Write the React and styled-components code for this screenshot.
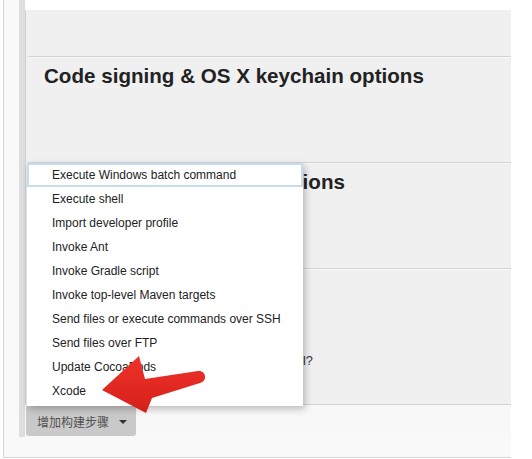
import React from "react";
import styled, { createGlobalStyle } from "styled-components";

const Global = createGlobalStyle`
  html, body { margin: 0; padding: 0; background: #ffffff; }
  body { font-family: "Liberation Sans", Arial, sans-serif; }
`;

const Frame = styled.div`
  position: relative;
  box-sizing: border-box;
  margin-left: 3px;
  width: 508px;
  height: 458px;
  padding-left: 15px;
  background: #f9f9f9;
  border-left: 1px solid #d6d6d6;
  border-bottom: 1px solid #d6d6d6;
`;

const Section = styled.div`
  display: flex;
  flex-direction: column;
  height: 437px;
  border-left: 6px solid #dedede;
  background: #ffffff;
`;

const Panel = styled.div`
  margin-top: 10px;
  display: flex;
  flex-direction: column;
  background: #f0f0f0;
  border-left: 1px solid #cfcfcf;
`;

const Row = styled.div`
  box-sizing: content-box;
  height: ${(p) => p.$h}px;
  margin-left: 2px;
  padding-left: 16px;
  border-bottom: 1px solid #d4d4d4;
  box-shadow: 0 1px 0 #f7f7f7;
`;

const Heading = styled.h2`
  margin: 0;
  padding-top: 8px;
  font-size: 20.6px;
  line-height: 22px;
  font-weight: bold;
  color: #222222;
`;

const Note = styled.div`
  padding-top: 84px;
  font-size: 12.8px;
  line-height: 16px;
  color: #333333;
`;

const Footer = styled.div`
  position: relative;
  flex: 1;
  display: flex;
  align-items: flex-start;
  padding: 1px 0 0 1px;
  background: #f8f8f8;
`;

const AddButton = styled.button`
  display: flex;
  align-items: center;
  gap: 10px;
  height: 30px;
  padding: 0 9px 0 11px;
  border: none;
  border-radius: 0 0 3px 3px;
  background: #c9c9c9;
  color: #505050;
  font-family: "Noto Sans CJK SC", "Liberation Sans", sans-serif;
  font-size: 12px;
  cursor: pointer;
`;

const Caret = styled.span`
  width: 0;
  height: 0;
  margin-top: 2px;
  border-left: 4px solid transparent;
  border-right: 4px solid transparent;
  border-top: 4px solid #333333;
`;

const Menu = styled.ul`
  position: absolute;
  left: 2px;
  bottom: calc(100% - 1px);
  width: 276px;
  margin: 0;
  padding: 0 0 3px;
  list-style: none;
  background: #ffffff;
  box-shadow: 2px 3px 7px rgba(0, 0, 0, 0.25);
  z-index: 2;
`;

const Item = styled.li`
  height: 24px;
  padding-left: 25px;
  font-size: 12px;
  line-height: 24px;
  color: #222222;
  white-space: nowrap;
  box-shadow: ${(p) => (p.$active ? "inset 0 0 0 2px #c6ddef" : "none")};
`;

const Arrow = styled.svg`
  position: absolute;
  left: 96px;
  top: 350px;
  z-index: 3;
`;

const items = [
  "Execute Windows batch command",
  "Execute shell",
  "Import developer profile",
  "Invoke Ant",
  "Invoke Gradle script",
  "Invoke top-level Maven targets",
  "Send files or execute commands over SSH",
  "Send files over FTP",
  "Update CocoaPods",
  "Xcode",
];

export default function App() {
  return (
    <>
      <Global />
      <Frame>
        <Section>
          <Panel>
            <Row $h={46} />
            <Row $h={105}>
              <Heading>Code signing &amp; OS X keychain options</Heading>
            </Row>
            <Row $h={105}>
              <Heading>Advanced Xcode build options</Heading>
            </Row>
            <Row $h={135}>
              <Note>Stop the build when a pod install or update fail?</Note>
            </Row>
          </Panel>
          <Footer>
            <Menu>
              {items.map((t, i) => (
                <Item key={t} $active={i === 0}>
                  {t}
                </Item>
              ))}
            </Menu>
            <AddButton>
              增加构建步骤
              <Caret />
            </AddButton>
          </Footer>
        </Section>
        <Arrow width="112" height="66" viewBox="100 350 112 66">
          <defs>
            <linearGradient id="ar" x1="0" y1="0" x2="0" y2="1">
              <stop offset="0" stopColor="#f0322a" />
              <stop offset="1" stopColor="#d4201a" />
            </linearGradient>
          </defs>
          <path
            d="M102 390 L139 356 L145 379 L198 371 C206 370 208 381 200 383 L152 398 L146 413 Z"
            fill="url(#ar)"
          />
        </Arrow>
      </Frame>
    </>
  );
}
